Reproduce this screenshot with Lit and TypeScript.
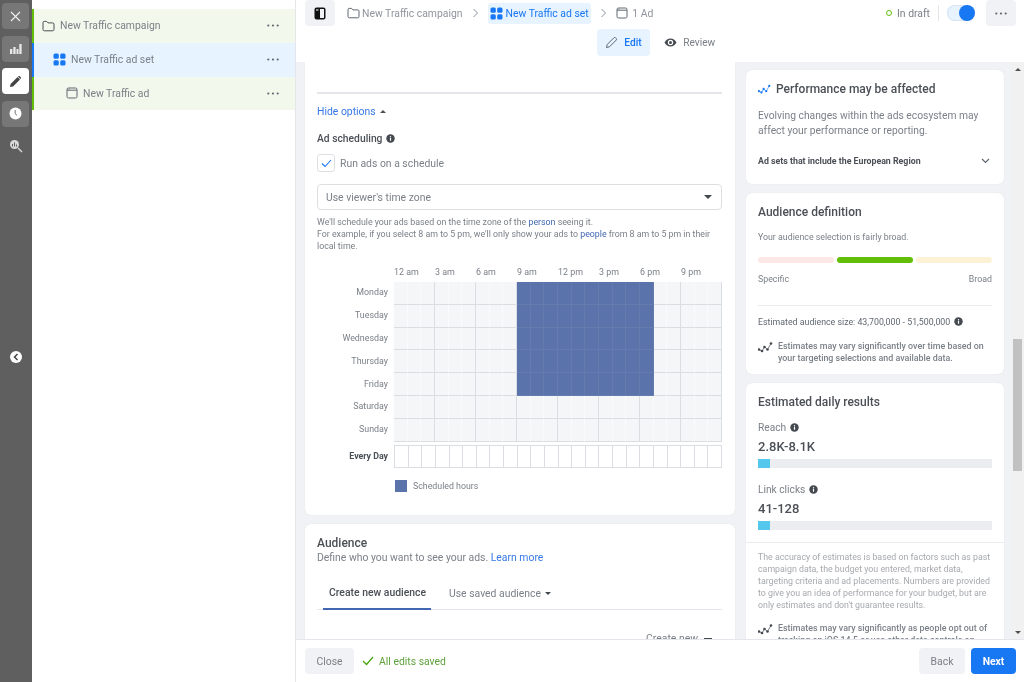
import { LitElement, html, css, svg } from 'lit';
import { customElement } from 'lit/decorators.js';

const DAYS = ['Monday', 'Tuesday', 'Wednesday', 'Thursday', 'Friday', 'Saturday', 'Sunday'];
const HOURS = ['12 am', '3 am', '6 am', '9 am', '12 pm', '3 pm', '6 pm', '9 pm'];

const folderIcon = (c = '#4b4f56') => html`<svg class="ico" width="13" height="12" viewBox="0 0 13 12" fill="none" stroke=${c} stroke-width="1"><path d="M1 2.600c0-.7.5-1.200 1.200-1.200h2.400l1.400 1.500h4.800c.7 0 1.200.5 1.200 1.200v5.500c0 .7-.5 1.200-1.200 1.200H2.200C1.500 10.800 1 10.300 1 9.600z"/></svg>`;
const adIcon = (c = '#4b4f56') => html`<svg class="ico" width="12" height="12" viewBox="0 0 12 12" fill="none" stroke=${c} stroke-width="1"><rect x="1" y="1" width="10" height="10" rx="1.500"/><path d="M1 3.200h10" /><path d="M2.500 2.200h1" /></svg>`;
const adsetIcon = () => html`<svg class="ico" width="13" height="13" viewBox="0 0 13 13" fill="#1877f2"><rect x="0.500" y="0.500" width="5.300" height="5.300" rx="1.500"/><rect x="7.200" y="0.500" width="5.300" height="5.300" rx="1.500"/><rect x="0.500" y="7.200" width="5.300" height="5.300" rx="1.500"/><rect x="7.200" y="7.200" width="5.300" height="5.300" rx="1.500"/></svg>`;
const dots = (c = '#606770') => html`<svg class="ico" width="12" height="3" viewBox="0 0 12 3" fill=${c}><circle cx="1.300" cy="1.500" r="1.100"/><circle cx="6" cy="1.500" r="1.100"/><circle cx="10.700" cy="1.500" r="1.100"/></svg>`;
const info = (s = 10) => html`<svg class="ico" width=${s} height=${s} viewBox="0 0 10 10"><circle cx="5" cy="5" r="4.700" fill="#444950"/><rect x="4.350" y="4.300" width="1.300" height="3.200" fill="#fff"/><rect x="4.350" y="2.400" width="1.300" height="1.300" fill="#fff"/></svg>`;
const spark = (c = '#444950', w = 15) => html`<svg class="ico" width=${w} height="12" viewBox="0 0 15 12" fill="none" stroke=${c} stroke-width="0.700">
  <path d="M1 8.500l3 1.500 2.500-4 3 2.500 3.500-6"/>${[[1, 8.5], [4, 10], [6.5, 6], [9.5, 8.5], [13, 2.5]].map(([x, y]) => svg`<circle cx=${x} cy=${y} r="1.300" fill=${c} stroke="none"/>`)}</svg>`;
const chev = (c = '#606770') => html`<svg class="ico" width="7" height="10" viewBox="0 0 7 10" fill="none" stroke=${c} stroke-width="1"><path d="M1.500 1l4 4-4 4"/></svg>`;
const caret = (c = '#444950', w = 8) => html`<svg class="ico" width=${w} height=${w / 2} viewBox="0 0 8 4" fill=${c}><path d="M0 0h8L4 4z"/></svg>`;
const caretUp = (c = '#444950', w = 6) => html`<svg class="ico" width=${w} height=${w / 2} viewBox="0 0 8 4" fill=${c}><path d="M0 4h8L4 0z"/></svg>`;

@customElement('app-root')
export class AppRoot extends LitElement {
  static styles = css`
    :host {
      display: flex;
      width: 1024px;
      height: 682px;
      overflow: hidden;
      background: #fff;
      font-family: Roboto, 'Liberation Sans', sans-serif;
      font-size: 10.4px;
      color: #606770;
      filter: blur(0.35px);
    }
    .ico { flex: none; display: block; }
    a { color: #1877f2; text-decoration: none; }

    /* left rail */
    .rail {
      width: 32px;
      flex: none;
      background: #5f5f5f;
      display: flex;
      flex-direction: column;
      align-items: center;
      padding: 3px 1px 0 0;
      box-sizing: border-box;
      gap: 6.500px;
    }
    .rail-btn {
      width: 27px;
      height: 26px;
      border-radius: 4px;
      background: #777;
      display: flex;
      align-items: center;
      justify-content: center;
    }
    .rail-btn.active { background: #fff; }
    .rail-btn.plain { background: none; }
    .rail-collapse {
      margin-top: 185px;
      width: 12px;
      height: 12px;
      border-radius: 50%;
      background: #fff;
      display: flex;
      align-items: center;
      justify-content: center;
    }

    /* campaign tree */
    .tree {
      width: 264px;
      flex: none;
      padding-top: 9px;
      box-sizing: border-box;
      border-right: 1px solid #e4e6e8;
    }
    .tree-row {
      height: 33.800px;
      display: flex;
      align-items: center;
      gap: 5px;
      background: #f3f8ec;
      border-left: 2px solid #63be09;
      padding-right: 16px;
      color: #7b8088;
      font-size: 10.400px;
      box-sizing: border-box;
    }
    .tree-row.blue { background: #e7f3ff; border-left-color: #1877f2; }
    .tree-row span { flex: 1; }
    .tree-row.l0 { padding-left: 8px; }
    .tree-row.l1 { padding-left: 19px; gap: 5px; }
    .tree-row.l2 { padding-left: 32px; gap: 5px; }

    /* main */
    .main { flex: 1; min-width: 0; display: flex; flex-direction: column; }
    .head { height: 62px; flex: none; box-sizing: border-box; padding: 0 8px 0 9px; }
    .head-top { display: flex; align-items: center; height: 26px; }
    .square {
      width: 30px;
      height: 26px;
      background: #f0f2f5;
      border-radius: 4px;
      display: flex;
      align-items: center;
      justify-content: center;
    }
    .crumbs { display: flex; align-items: center; margin-left: 12px; flex: 1; color: #90949c; font-size: 10.400px; gap: 2px; }
    .crumbs .sep { margin: 0 7px; }
    .chip {
      height: 21px;
      display: flex;
      align-items: center;
      gap: 3px;
      padding: 0 2px;
      background: #e7f3ff;
      border-radius: 3px;
      color: #1877f2;
    }
    .status { display: flex; align-items: center; color: #7b8088; font-size: 10.400px; }
    .status i { width: 4px; height: 4px; border: 1.500px solid #63be09; border-radius: 50%; margin-right: 5px; }
    .status b { width: 1px; height: 16px; background: #e4e6e8; margin: 0 8px; }
    .toggle { width: 28px; height: 16px; border-radius: 8px; background: #e7f3ff; box-shadow: inset 0 0 0 1px #d7e3f3; position: relative; margin-right: 11px; }
    .toggle::after { content: ''; position: absolute; right: 0; top: 0; width: 16px; height: 16px; border-radius: 50%; background: #1877f2; }
    .head-tabs { display: flex; justify-content: center; align-items: center; margin-top: 3px; gap: 14px; padding-right: 9px; }
    .tab { display: flex; align-items: center; gap: 6px; color: #7b8088; font-size: 10.200px; height: 27px; }
    .tab.on { background: #e7f3ff; padding: 0 8.500px; border-radius: 4px; color: #1877f2; font-weight: 500; }

    /* scrolling body */
    .body { flex: 1; min-height: 0; display: flex; background: #f0f2f5; overflow: hidden; }
    .cols { flex: 1; display: flex; gap: 11px; padding: 0 8px 0 9px; overflow: hidden; align-items: flex-start; }
    .left { width: 430px; flex: none; display: flex; flex-direction: column; gap: 9px; }
    .right { width: 258px; flex: none; display: flex; flex-direction: column; gap: 9px; padding-top: 8px; }
    .card { background: #fff; border-radius: 6px; box-shadow: 0 0 1px rgba(0, 0, 0, .12); box-sizing: border-box; flex: none; }
    .bar { width: 12px; flex: none; background: #f1f1f1; display: flex; flex-direction: column; align-items: center; position: relative; }
    .thumb { position: absolute; top: 277px; left: 1px; width: 9px; height: 132px; background: #c1c1c1; }
    .bar-up { margin-top: 6px; }
    .bar-down { position: absolute; bottom: 5px; left: 3px; }

    /* schedule card */
    .sched-card { height: 453px; padding: 30px 13px 0 12px; border-radius: 0 0 6px 6px; }
    .rule { height: 1.500px; background: #e4e6eb; }
    .hide { display: flex; align-items: center; gap: 4px; margin-top: 11.500px; height: 13px; color: #3578e5; font-size: 10.400px; }
    .label { display: flex; align-items: center; gap: 4px; margin-top: 14px; height: 13px; font-weight: 500; color: #4b4f56; font-size: 10.300px; }
    .check-row { display: flex; align-items: center; gap: 5px; margin-top: 9px; height: 18px; font-size: 10.400px; color: #7b8088; }
    .box { width: 16px; height: 16px; border: 1px solid #dddfe2; border-radius: 3px; display: flex; align-items: center; justify-content: center; }
    .select {
      height: 26px;
      margin-top: 12px;
      border: 1px solid #dddfe2;
      border-radius: 4px;
      box-sizing: border-box;
      display: flex;
      align-items: center;
      justify-content: space-between;
      padding: 0 9px 0 8px;
      font-size: 10.400px;
      color: #7b8088;
    }
    .help { margin: 6px 0 0; font-size: 8.800px; line-height: 12px; color: #7b8088; }
    .help a { color: #4267b2; }
    .hours { display: grid; grid-template-columns: repeat(8, 41px); margin: 13px 0 0 77px; height: 14px; align-items: center; font-size: 8.900px; color: #7b8088; }
    .sched { display: grid; grid-template-columns: 71px 328px; column-gap: 6px; margin-top: 3px; }
    .days { display: flex; flex-direction: column; }
    .days span { height: 22.800px; display: flex; align-items: center; justify-content: flex-end; font-size: 8.900px; color: #7b8088; position: relative; top: -1px; }
    .gridbox { display: grid; grid-template-columns: repeat(24, 1fr); grid-auto-rows: 22.800px; box-shadow: inset 0 0 0 1px #dadde1; }
    .cell { background: #f5f6f7; border-right: 1px solid #fafafb; border-bottom: 1px solid #dadde1; box-sizing: border-box; }
    .cell.major { border-right-color: #dadde1; }
    .cell.on { background: #5a73ab; border-right-color: #657bad; border-bottom-color: #657bad; }
    .every { display: grid; grid-template-columns: 71px 328px; column-gap: 6px; margin-top: 3px; }
    .every strong { display: flex; align-items: center; justify-content: flex-end; font-size: 8.800px; font-weight: 700; color: #4b4f56; }
    .everybox { display: grid; grid-template-columns: repeat(24, 1fr); height: 23px; border-top: 1px solid #dadde1; border-left: 1px solid #dadde1; box-sizing: border-box; }
    .everybox div { border-right: 1px solid #dadde1; border-bottom: 1px solid #dadde1; }
    .legend { display: flex; align-items: center; gap: 6px; margin: 12px 0 0 78px; height: 12px; font-size: 8.800px; color: #7b8088; }
    .legend i { width: 12px; height: 12px; background: #5a73ab; }

    /* audience card */
    .aud-card { height: 200px; padding: 12px 13px 0 12px; }
    .title { font-size: 12px; font-weight: 500; color: #4b4f56; line-height: 14px; }
    .sub { font-size: 10.400px; color: #7b8088; line-height: 14px; margin-top: 1px; }
    .sub a { color: #3578e5; }
    .aud-tabs { display: flex; margin-top: 12px; height: 32px; border-bottom: 1px solid #e4e6eb; font-size: 10.400px; color: #7b8088; align-items: stretch; padding-left: 6px; gap: 12px; white-space: nowrap; }
    .aud-tabs div { display: flex; align-items: center; gap: 4px; padding: 0 6px; box-sizing: border-box; height: 33px; }
    .aud-tabs .on { color: #4b4f56; font-weight: 500; border-bottom: 2px solid #4267b2; width: 108px; }
    .create { display: flex; justify-content: flex-end; align-items: center; gap: 6px; margin-top: 22px; padding-right: 10px; font-size: 10.400px; color: #7b8088; }

    /* right cards */
    .perf { height: 114px; padding: 12px 12px 0 12px; }
    .perf .t { display: flex; gap: 5px; align-items: center; font-size: 12px; font-weight: 500; color: #4b4f56; height: 14px; }
    .perf p { margin: 13px 0 0; font-size: 10.300px; line-height: 14.500px; color: #7b8088; }
    .perf .row { display: flex; align-items: center; justify-content: space-between; margin-top: 16px; padding-right: 2px; font-size: 8.800px; font-weight: 700; color: #4b4f56; height: 14px; }
    .def { height: 181px; padding: 12px 12px 0 12px; }
    .small { font-size: 8.800px; color: #7b8088; }
    .def .sel { margin-top: 12px; line-height: 12px; }
    .meter { display: grid; grid-template-columns: repeat(3, 1fr); gap: 3px; margin-top: 14px; }
    .meter i { height: 6px; border-radius: 3px; }
    .ends { display: flex; justify-content: space-between; margin-top: 10px; line-height: 12px; }
    .hr { height: 1px; background: #e9ebee; }
    .def .hr { margin-top: 20px; }
    .size { display: flex; align-items: center; gap: 4px; margin-top: 9px; height: 13px; color: #606770; }
    .note { display: flex; gap: 5px; margin-top: 12px; font-size: 8.900px; line-height: 12px; font-weight: 500; color: #7b8088; }
    .note .ico { margin-top: 1px; }
    .res { padding: 12px 0 0 0; }
    .res .pad { padding: 0 12px 12px; }
    .res .metric { display: flex; align-items: center; gap: 4px; margin-top: 12px; height: 12px; font-size: 10.200px; color: #7b8088; }
    .res .metric.second { margin-top: 15px; }
    .res .val { margin-top: 6px; font-size: 13px; font-weight: 500; color: #4b4f56; line-height: 15px; }
    .track { height: 9px; margin-top: 5px; background: #ebedf0; }
    .track i { display: block; width: 12px; height: 9px; background: #54c7ec; }
    .disc { padding: 8px 12px 0; font-size: 8.800px; line-height: 12px; color: #a6a9ae; }
    .disc + .note { padding: 0 12px; margin-top: 11px; }

    /* footer */
    .foot { height: 43px; flex: none; box-sizing: border-box; border-top: 1px solid #e4e6eb; display: flex; align-items: center; padding: 0 8px 0 9px; background: #fff; }
    .btn { height: 26px; display: flex; align-items: center; justify-content: center; border-radius: 4px; background: #f0f2f5; font-size: 10.400px; color: #7b8088; }
    .btn.close { width: 49px; }
    .btn.back { width: 46px; margin-right: 6px; }
    .btn.next { width: 45px; background: #1877f2; color: #fff; font-weight: 700; }
    .saved { display: flex; align-items: center; gap: 5px; margin-left: 8px; flex: 1; color: #5da13a; font-size: 10.400px; }
  `;

  cells() {
    return DAYS.flatMap((_, d) =>
      Array.from({ length: 24 }, (_, h) => {
        const on = d < 5 && h >= 9 && h < 19;
        const major = (h + 1) % 3 === 0;
        return html`<div class="cell ${major ? 'major' : ''} ${on ? 'on' : ''}"></div>`;
      }));
  }

  render() {
    return html`
      <nav class="rail">
        <div class="rail-btn"><svg width="13" height="13" viewBox="0 0 13 13" stroke="#f0f0f0" stroke-width="1.100"><path d="M2 2l9 9M11 2l-9 9"/></svg></div>
        <div class="rail-btn"><svg width="13" height="13" viewBox="0 0 13 13" fill="#e8e8e8"><rect x="1" y="7" width="2.300" height="5"/><rect x="4.300" y="5" width="2.300" height="7"/><rect x="7.500" y="7" width="2" height="5"/><rect x="10.300" y="2" width="2.300" height="10"/></svg></div>
        <div class="rail-btn active"><svg width="13" height="13" viewBox="0 0 13 13" fill="#444"><path d="M1 12l.6-3L8.600 2l2.400 2.400-7 7zM9.400 1.200c.4-.4 1-.4 1.300 0l1.100 1.100c.4.400.4.900 0 1.300l-.4.4L9 1.600z"/></svg></div>
        <div class="rail-btn"><svg width="13" height="13" viewBox="0 0 13 13"><circle cx="6.500" cy="6.500" r="6" fill="#fff"/><path d="M6.200 3v3.800l1.800 1.500" stroke="#777" stroke-width="1" fill="none"/></svg></div>
        <div class="rail-btn plain"><svg width="14" height="14" viewBox="0 0 14 14" fill="none"><circle cx="5.500" cy="5.500" r="4.500" fill="#d8d8d8"/><path d="M9 9l4 4" stroke="#d8d8d8" stroke-width="1.400"/><path d="M3.500 7.500V5M5.500 7.500V3.500M7.500 7.500V5.500" stroke="#5f5f5f"/></svg></div>
        <div class="rail-collapse"><svg width="6" height="8" viewBox="0 0 6 8" fill="none" stroke="#444" stroke-width="1.500"><path d="M4.500 1L1.500 4l3 3"/></svg></div>
      </nav>

      <aside class="tree">
        <div class="tree-row l0">${folderIcon()}<span>New Traffic campaign</span>${dots()}</div>
        <div class="tree-row l1 blue">${adsetIcon()}<span>New Traffic ad set</span>${dots()}</div>
        <div class="tree-row l2">${adIcon('#606770')}<span>New Traffic ad</span>${dots()}</div>
      </aside>

      <div class="main">
        <header class="head">
          <div class="head-top">
            <div class="square"><svg width="12" height="13" viewBox="0 0 12 13"><rect x="0.500" y="0.500" width="11" height="12" rx="2" fill="#111"/><rect x="6" y="2" width="4" height="9" fill="#f0f2f5"/><rect x="2" y="2" width="2.500" height="2" fill="#888"/></svg></div>
            <div class="crumbs">
              ${folderIcon('#606770')}<span>New Traffic campaign</span>
              <span class="sep">${chev('#8d949e')}</span>
              <div class="chip">${adsetIcon()}New Traffic ad set</div>
              <span class="sep">${chev('#8d949e')}</span>
              ${adIcon('#606770')}<span>&nbsp;1 Ad</span>
            </div>
            <div class="status"><i></i>In draft<b></b></div>
            <div class="toggle"></div>
            <div class="square">${dots('#606770')}</div>
          </div>
          <div class="head-tabs">
            <div class="tab on"><svg width="13" height="13" viewBox="0 0 13 13" fill="none" stroke="#606770" stroke-width="1"><path d="M1.500 11.500l.7-3L9 1.700c.4-.4 1-.4 1.400 0l.9.9c.4.400.4 1 0 1.400L4.500 10.800z"/></svg>Edit</div>
            <div class="tab"><svg width="13" height="9" viewBox="0 0 13 9"><path d="M.5 4.500C2 1.800 4 .5 6.500.5s4.500 1.300 6 4c-1.500 2.700-3.500 4-6 4s-4.500-1.300-6-4z" fill="#444950"/><circle cx="6.500" cy="4.500" r="2.700" fill="#fff"/><circle cx="6.500" cy="4.500" r="1.500" fill="#444950"/></svg>Review</div>
          </div>
        </header>

        <div class="body">
          <div class="cols">
            <div class="left">
              <section class="card sched-card">
                <div class="rule"></div>
                <div class="hide">Hide options ${caretUp('#4b4f56', 6)}</div>
                <div class="label">Ad scheduling ${info(9)}</div>
                <div class="check-row">
                  <div class="box"><svg width="11" height="9" viewBox="0 0 11 9" fill="none" stroke="#1877f2" stroke-width="1.100"><path d="M1 4.500L4 7.500 10 1"/></svg></div>
                  Run ads on a schedule
                </div>
                <div class="select">Use viewer's time zone ${caret('#444950', 8)}</div>
                <p class="help">We'll schedule your ads based on the time zone of the <a>person</a> seeing it.<br>For example, if you select 8 am to 5 pm, we'll only show your ads to <a>people</a> from 8 am to 5 pm in their local time.</p>
                <div class="hours">${HOURS.map((h) => html`<span>${h}</span>`)}</div>
                <div class="sched">
                  <div class="days">${DAYS.map((d) => html`<span>${d}</span>`)}</div>
                  <div class="gridbox">${this.cells()}</div>
                </div>
                <div class="every">
                  <strong>Every Day</strong>
                  <div class="everybox">${Array.from({ length: 24 }, () => html`<div></div>`)}</div>
                </div>
                <div class="legend"><i></i>Scheduled hours</div>
              </section>

              <section class="card aud-card">
                <div class="title">Audience</div>
                <div class="sub">Define who you want to see your ads. <a>Learn more</a></div>
                <div class="aud-tabs">
                  <div class="on">Create new audience</div>
                  <div>Use saved audience ${caret('#444950', 6)}</div>
                </div>
                <div class="create">Create new <svg width="8" height="2"><rect width="8" height="2" fill="#444950"/></svg></div>
              </section>
            </div>

            <div class="right">
              <section class="card perf">
                <div class="t">${spark('#1877f2', 13)}Performance may be affected</div>
                <p>Evolving changes within the ads ecosystem may affect your performance or reporting.</p>
                <div class="row">Ad sets that include the European Region <svg width="9" height="6" viewBox="0 0 9 6" fill="none" stroke="#606770" stroke-width="1.200"><path d="M1 1l3.500 3.500L8 1"/></svg></div>
              </section>

              <section class="card def">
                <div class="title">Audience definition</div>
                <div class="small sel">Your audience selection is fairly broad.</div>
                <div class="meter">
                  <i style="background:#fde8e6"></i><i style="background:#63be09"></i><i style="background:#fef2d6"></i>
                </div>
                <div class="small ends"><span>Specific</span><span>Broad</span></div>
                <div class="hr"></div>
                <div class="small size">Estimated audience size: 43,700,000 - 51,500,000 ${info(9)}</div>
                <div class="note">${spark()}<span>Estimates may vary significantly over time based on your targeting selections and available data.</span></div>
              </section>

              <section class="card res">
                <div class="pad">
                  <div class="title">Estimated daily results</div>
                  <div class="metric">Reach ${info(9)}</div>
                  <div class="val">2.8K-8.1K</div>
                  <div class="track"><i></i></div>
                  <div class="metric second">Link clicks ${info(9)}</div>
                  <div class="val">41-128</div>
                  <div class="track"><i></i></div>
                </div>
                <div class="hr"></div>
                <div class="disc">The accuracy of estimates is based on factors such as past campaign data, the budget you entered, market data, targeting criteria and ad placements. Numbers are provided to give you an idea of performance for your budget, but are only estimates and don't guarantee results.</div>
                <div class="note">${spark()}<span>Estimates may vary significantly as people opt out of tracking on iOS 14.5 or use other data controls on</span></div>
              </section>
            </div>
          </div>
          <div class="bar">
            <div class="bar-up">${caretUp('#505050', 6)}</div>
            <div class="thumb"></div>
            <div class="bar-down">${caret('#505050', 6)}</div>
          </div>
        </div>

        <footer class="foot">
          <div class="btn close">Close</div>
          <div class="saved"><svg width="12" height="10" viewBox="0 0 12 10" fill="none" stroke="#42a60a" stroke-width="1.200"><path d="M1 5l3.500 3.500L11 1"/></svg>All edits saved</div>
          <div class="btn back">Back</div>
          <div class="btn next">Next</div>
        </footer>
      </div>
    `;
  }
}
